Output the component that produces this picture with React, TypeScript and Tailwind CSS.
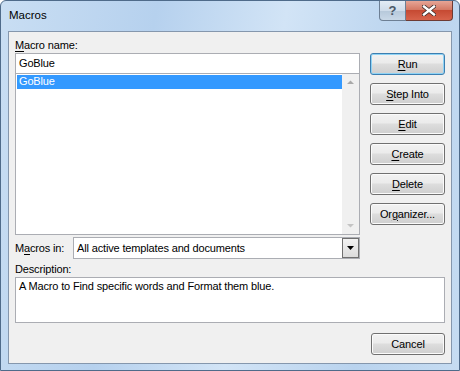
import React from "react";

const font = { fontFamily: '"Liberation Sans", Arial, sans-serif' };

function Btn({ u, rest, pre = "", primary = false }: { u: string; rest: string; pre?: string; primary?: boolean }) {
  return (
    <button
      className={
        "h-[22px] w-[75px] rounded-[3px] border text-[11px] tracking-[-0.15px] text-black leading-none bg-[linear-gradient(#f2f2f2_0%,#ebebeb_45%,#dddddd_50%,#cfcfcf_100%)] " +
        (primary ? "border-[#3c7fb1] shadow-[inset_0_0_0_1px_#8fd3f5]" : "border-[#707070] shadow-[inset_0_0_0_1px_#fbfbfb]")
      }
    >
      {pre}
      <span className="underline underline-offset-2">{u}</span>
      {rest}
    </button>
  );
}

export default function App() {
  return (
    <div
      className="relative w-[460px] h-[371px] overflow-hidden rounded-t-[6px] border border-[#4f6b8a] bg-[linear-gradient(100deg,#c9def3_0%,#b6d1ee_30%,#d2e4f6_55%,#b9d3ee_80%,#c6dcf2_100%)]"
      style={font}
    >
      {/* title bar */}
      <div className="flex h-[30px] items-start justify-between">
        <div className="pl-[8px] pt-[6px] text-[11.5px] text-black">Macros</div>
        <div className="mr-[6px] flex">
          <div className="flex h-[20px] w-[27px] items-center justify-center rounded-bl-[4px] border border-t-0 border-[#6d7f94] bg-[linear-gradient(#e3ecf5_0%,#cfdcea_50%,#b6c8da_51%,#c9d8e7_100%)] text-[13px] font-bold text-[#4a5868]">
            ?
          </div>
          <div className="flex h-[20px] w-[47px] items-center justify-center rounded-br-[4px] border border-l-0 border-t-0 border-[#6d3b34] bg-[linear-gradient(#e6a596_0%,#d47a66_45%,#c64a33_50%,#d7634b_100%)]">
            <svg width="14" height="11" viewBox="0 0 14 11">
              <path d="M2 1.5 L12 9.5 M12 1.5 L2 9.5" stroke="#3a2a28" strokeWidth="4" strokeLinecap="square" />
              <path d="M2 1.5 L12 9.5 M12 1.5 L2 9.5" stroke="#ffffff" strokeWidth="2.4" strokeLinecap="square" />
            </svg>
          </div>
        </div>
      </div>

      {/* client area */}
      <div className="mx-[7px] flex h-[333px] flex-col border border-[#8597ad] bg-[#f0f0f0] px-[6px] pt-[6px] text-[11px] tracking-[-0.15px] text-black">
        <div className="flex gap-[10px]">
          <div className="flex w-[346px] flex-col">
            <div className="h-[15px] leading-[15px]">
              <span className="underline underline-offset-2">M</span>acro name:
            </div>
            <div className="h-[21px] border border-[#abadb3] bg-white pl-[3px] leading-[18px]">GoBlue</div>
            <div className="flex h-[161px] border border-t-0 border-[#abadb3] bg-white">
              <div className="flex-1 pl-[1px] pt-[1px]">
                <div className="h-[14px] bg-[#3399ff] pl-[2px] leading-[13px] text-white">GoBlue</div>
              </div>
              <div className="flex w-[17px] flex-col justify-between bg-[#f0f0f0] py-[6px]">
                <svg width="17" height="5" viewBox="0 0 17 5">
                  <path d="M8.5 0.5 L12 4 L5 4 Z" fill="#a9a9a9" />
                </svg>
                <svg width="17" height="5" viewBox="0 0 17 5">
                  <path d="M8.5 4.5 L12 1 L5 1 Z" fill="#c4c4c4" />
                </svg>
              </div>
            </div>
            <div className="mt-[2px] flex items-center">
              <div className="w-[58px]">
                M<span className="underline underline-offset-2">a</span>cros in:
              </div>
              <div className="flex h-[22px] flex-1 items-center border border-[#abadb3] bg-white pl-[3px]">
                <span className="flex-1">All active templates and documents</span>
                <div className="flex h-[20px] w-[17px] items-center justify-center border border-[#707070] bg-[linear-gradient(#f2f2f2,#dcdcdc)]">
                  <svg width="7" height="4" viewBox="0 0 7 4">
                    <path d="M0 0 L7 0 L3.5 4 Z" fill="#000" />
                  </svg>
                </div>
              </div>
            </div>
          </div>
          <div className="flex flex-col gap-[8px] pt-[15px]">
            <Btn primary u="R" rest="un" />
            <Btn u="S" rest="tep Into" />
            <Btn u="E" rest="dit" />
            <Btn u="C" rest="reate" />
            <Btn u="D" rest="elete" />
            <Btn pre="Or" u="g" rest="anizer..." />
          </div>
        </div>
        <div className="mt-[2px] h-[16px] leading-[16px]">Description:</div>
        <div className="h-[46px] border border-[#abadb3] bg-white pl-[3px] pt-[1px] leading-[15px]">
          A Macro to Find specific words and Format them blue.
        </div>
        <div className="mt-[10px] flex justify-end">
          <button className="h-[22px] w-[74px] rounded-[3px] border border-[#707070] bg-[linear-gradient(#f2f2f2_0%,#ebebeb_45%,#dddddd_50%,#cfcfcf_100%)] text-[11px] shadow-[inset_0_0_0_1px_#fbfbfb]">
            Cancel
          </button>
        </div>
      </div>
    </div>
  );
}
